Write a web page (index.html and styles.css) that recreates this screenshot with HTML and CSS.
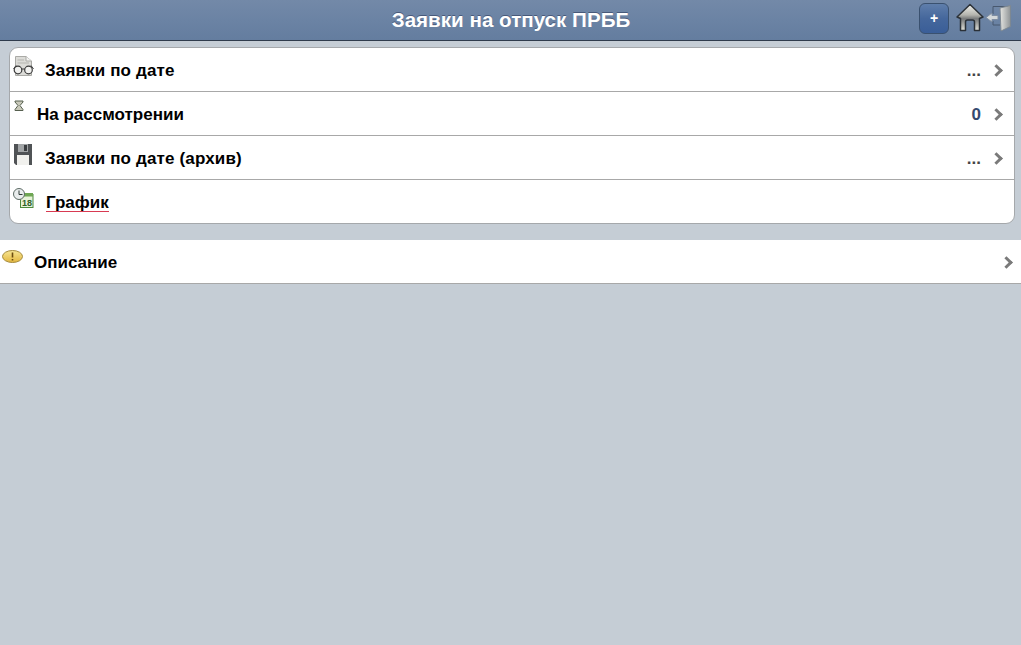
FILE: index.html
```html
<!DOCTYPE html>
<html lang="en">
<head>
    <meta charset="UTF-8">
    <meta name="viewport" content="width=device-width, initial-scale=1.0">
    <title>Заявки на отпуск ПРББ</title>
    <link rel="stylesheet" href="styles.css">
</head>
<body>
    <header class="toolbar">
        <h1 class="toolbar-title">Заявки на отпуск ПРББ</h1>
        <div class="toolbar-actions">
            <button class="add-btn" type="button">+</button>
            <svg class="home-icon" width="28" height="29" viewBox="0 0 28 29">
                <defs>
                    <linearGradient id="homeFill" x1="0" y1="0" x2="0" y2="1">
                        <stop offset="0" stop-color="#f2f2ec"/>
                        <stop offset="0.4" stop-color="#b4b4ae"/>
                        <stop offset="0.55" stop-color="#77797a"/>
                        <stop offset="1" stop-color="#e2e2da"/>
                    </linearGradient>
                </defs>
                <path d="M14 1.5 L27 14 L23.5 15.5 V27.5 H18.5 V19 Q18.5 17 16.5 17 H11.5 Q9.5 17 9.5 19 V27.5 H4.5 V15.5 L1 14 Z" fill="url(#homeFill)" stroke="#2b3138" stroke-width="1.5" stroke-linejoin="round"/>
            </svg>
            <svg class="exit-icon" width="27" height="28" viewBox="0 0 27 28">
                <defs>
                    <linearGradient id="doorFill" x1="0" y1="0" x2="1" y2="0">
                        <stop offset="0" stop-color="#e6e6e2"/>
                        <stop offset="1" stop-color="#8f9496"/>
                    </linearGradient>
                </defs>
                <path d="M8 10 V2.5 H24 V21 H16" fill="none" stroke="#48586e" stroke-width="1"/>
                <path d="M8 17 V21 H15" fill="none" stroke="#48586e" stroke-width="1"/>
                <path d="M15 4 L25.5 1.5 V22.5 L16 27 Z" fill="url(#doorFill)" stroke="#7d8892" stroke-width="1"/>
                <path d="M1 13.5 L7 9 V11.5 H13 V15.5 H7 V18 Z" fill="#d3d8da" stroke="#7f8ea2" stroke-width="1"/>
            </svg>
        </div>
    </header>

    <ul class="card">
        <li class="row">
            <svg class="icon icon-large" width="21" height="20" viewBox="0 0 21 20">
                <path d="M2.5 0.5 H13 L18.5 5 V19.5 H2.5 Z" fill="#dcdcd8" stroke="#aaaaa6"/>
                <path d="M13 0.5 V5 H18.5" fill="#f4f4f2" stroke="#aaaaa6"/>
                <path d="M4.5 4 H11 M4.5 7 H16" stroke="#b5b5b0"/>
                <circle cx="5" cy="14" r="3.8" fill="#f2f2f0" stroke="#3c3c3c" stroke-width="1.2"/>
                <circle cx="15.5" cy="14" r="3.8" fill="#f2f2f0" stroke="#3c3c3c" stroke-width="1.2"/>
                <path d="M8.5 13 H12 M0.5 13 L3 9.5 M20.5 13 L18 9.5" fill="none" stroke="#3c3c3c"/>
            </svg>
            <span class="row-label row-label-wide">Заявки по дате</span>
            <span class="row-value">...</span>
            <span class="chevron"></span>
        </li>
        <li class="row">
            <svg class="icon icon-narrow" width="10" height="12" viewBox="0 0 10 12">
                <path d="M1 1 H9 V2 L6 5.5 L9 9.5 V10.5 H1 V9.5 L4 5.5 L1 2 Z" fill="#c9c9ba" stroke="#56604f"/>
            </svg>
            <span class="row-label">На рассмотрении</span>
            <span class="row-value row-value-count">0</span>
            <span class="chevron"></span>
        </li>
        <li class="row">
            <svg class="icon icon-wide" width="20" height="21" viewBox="0 0 20 21">
                <path d="M1 0 H19 V21 H3 L1 19 Z" fill="#505356"/>
                <rect x="5" y="0" width="10" height="8" fill="#a2a5a7"/>
                <rect x="11" y="1" width="3" height="6" fill="#3a3d40"/>
                <rect x="4" y="11" width="12" height="10" fill="#f1f1ee"/>
            </svg>
            <span class="row-label row-label-wide">Заявки по дате (архив)</span>
            <span class="row-value">...</span>
            <span class="chevron"></span>
        </li>
        <li class="row">
            <svg class="icon icon-large" width="21" height="20" viewBox="0 0 21 20">
                <rect x="7.5" y="6.5" width="12.5" height="13" fill="#e6f2d8" stroke="#4d8a3e"/>
                <rect x="7.5" y="5" width="12.5" height="3.5" fill="#6ea653"/>
                <text class="icon-date" x="14" y="18" text-anchor="middle">18</text>
                <circle cx="6" cy="6" r="5.5" fill="#e9eded" stroke="#5c6a64"/>
                <path d="M6 2.5 V6.5 H9.5" fill="none" stroke="#2e3a36"/>
            </svg>
            <span class="row-label row-label-marked">График</span>
        </li>
    </ul>

    <div class="panel">
        <svg class="icon-note" width="21" height="13" viewBox="0 0 21 13">
            <defs>
                <linearGradient id="noteFill" x1="0" y1="0" x2="0" y2="1">
                    <stop offset="0" stop-color="#f7e694"/>
                    <stop offset="1" stop-color="#e3b73f"/>
                </linearGradient>
            </defs>
            <ellipse cx="10.5" cy="6.5" rx="10" ry="6" fill="url(#noteFill)" stroke="#a48a3c"/>
            <path d="M10.5 2.5 V7.5 M10.5 9 V10.5" stroke="#6b4d10" stroke-width="1.6"/>
        </svg>
        <span class="row-label">Описание</span>
        <span class="chevron"></span>
    </div>
</body>
</html>
```

FILE: styles.css
```css
* { box-sizing: border-box; }
html, body { height: 100%; }
body { margin: 0; overflow: hidden; background: #c5cdd5; font-family: "Liberation Sans", Arial, sans-serif; color: #000; }

.toolbar { position: relative; height: 41px; display: flex; align-items: center; justify-content: center; padding-left: 1px; background: linear-gradient(#7389a8, #6b83a4 50%, #647d9f); border-bottom: 1px solid #2f3b4c; }
.toolbar-title { margin: 0; font-size: 20.6px; font-weight: bold; color: #fff; text-shadow: 0 -1px 0 #47597a; }
.toolbar-actions { position: absolute; top: 3px; right: 9px; display: flex; align-items: flex-start; }
.add-btn { width: 30px; height: 31px; margin-right: 7px; padding: 0 0 2px; font: bold 14px "Liberation Sans", Arial, sans-serif; color: #fff; background: linear-gradient(#5f7eab, #45679c 50%, #3a5e98); border: 1px solid #3a516f; border-radius: 6px; }
.home-icon { margin-right: 1px; }
.exit-icon { margin-top: 1px; }

.card { list-style: none; margin: 6px 6px 16px 9px; padding: 0; background: #fff; border: 1px solid #a5a8ab; border-radius: 9px; }
.row { height: 44px; display: flex; align-items: center; padding: 2px 9px 0 3px; border-bottom: 1px solid #a8a8a8; }
.row:last-child { border-bottom: 0; height: 43px; }

.icon { align-self: flex-start; flex: none; margin-top: 6px; }
.icon-wide { margin-right: 12px; }
.icon-large { margin-right: 11px; }
.icon-narrow { margin-left: 1px; margin-right: 13px; }
.icon-date { font: bold 9px "Liberation Sans", Arial, sans-serif; fill: #2f5f28; }

.row-label { font-size: 17px; font-weight: bold; }
.row-label-wide { letter-spacing: 0.15px; }
.row-label-marked { margin-left: 1px; line-height: 17px; margin-top: 1px; border-bottom: 1px solid #d83a52; }
.row-value { margin-left: auto; margin-right: 11px; font-size: 17px; font-weight: bold; color: #444; }
.row-value-count { color: #34496f; }
.chevron { flex: none; width: 9px; height: 9px; margin-right: 4px; border-top: 3px solid #7a7a7a; border-right: 3px solid #7a7a7a; transform: rotate(45deg); }

.panel { height: 44px; display: flex; align-items: center; padding: 2px 6px 0 2px; background: #fff; border-bottom: 1px solid #a8a8a8; }
.panel .chevron { margin-left: auto; }
.icon-note { align-self: flex-start; margin-top: 8px; margin-right: 11px; flex: none; }
```
